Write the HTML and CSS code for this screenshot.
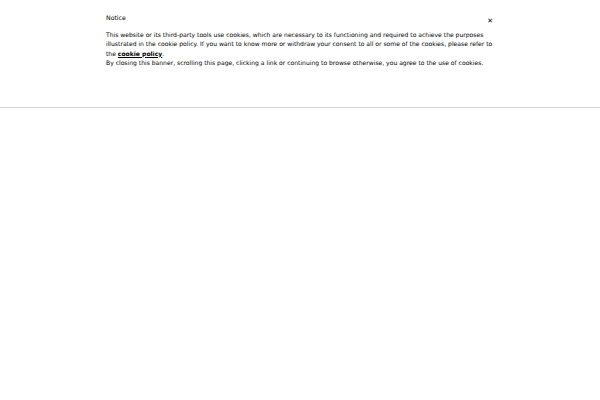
FILE: index.html
```html
<!DOCTYPE html>
<html>
<head>
<meta charset="utf-8">
<link rel="stylesheet" href="styles.css">
</head>
<body>
<div class="banner">
  <div class="inner">
    <div class="head">
      <div class="title">Notice</div>
      <button class="close" aria-label="close">&#x2715;</button>
    </div>
    <p class="text">This website or its third-party tools use cookies, which are necessary to its functioning and required to achieve the purposes illustrated in the cookie policy. If you want to know more or withdraw your consent to all or some of the cookies, please refer to the <a href="#">cookie policy</a>.<br>By closing this banner, scrolling this page, clicking a link or continuing to browse otherwise, you agree to the use of cookies.</p>
  </div>
</div>
</body>
</html>
```
FILE: styles.css
```css
html, body { margin: 0; padding: 0; background: #fff; }
body { font-family: "DejaVu Sans", sans-serif; color: #000; }
.banner {
  height: 108px;
  background: #fff;
  box-shadow: 0 6px 18px rgba(0,0,0,0.12);
  border-bottom: 1px solid #d4d4d4;
  box-sizing: border-box;
}
.inner {
  width: 388px;
  margin: 0 auto;
  padding-top: 13px;
}
.head { display: flex; justify-content: space-between; align-items: flex-start; }
.title { font-size: 6.2px; line-height: 10px; }
.close {
  border: 0; background: none; padding: 0; margin: 4px 1px 0 0;
  font-size: 7px; line-height: 8px; color: #000; font-family: "DejaVu Sans", sans-serif;
}
.text { margin: 5px 0 0; font-size: 6.05px; line-height: 9.33px; }
.text a { color: #000; font-weight: bold; text-decoration: underline; }
```
